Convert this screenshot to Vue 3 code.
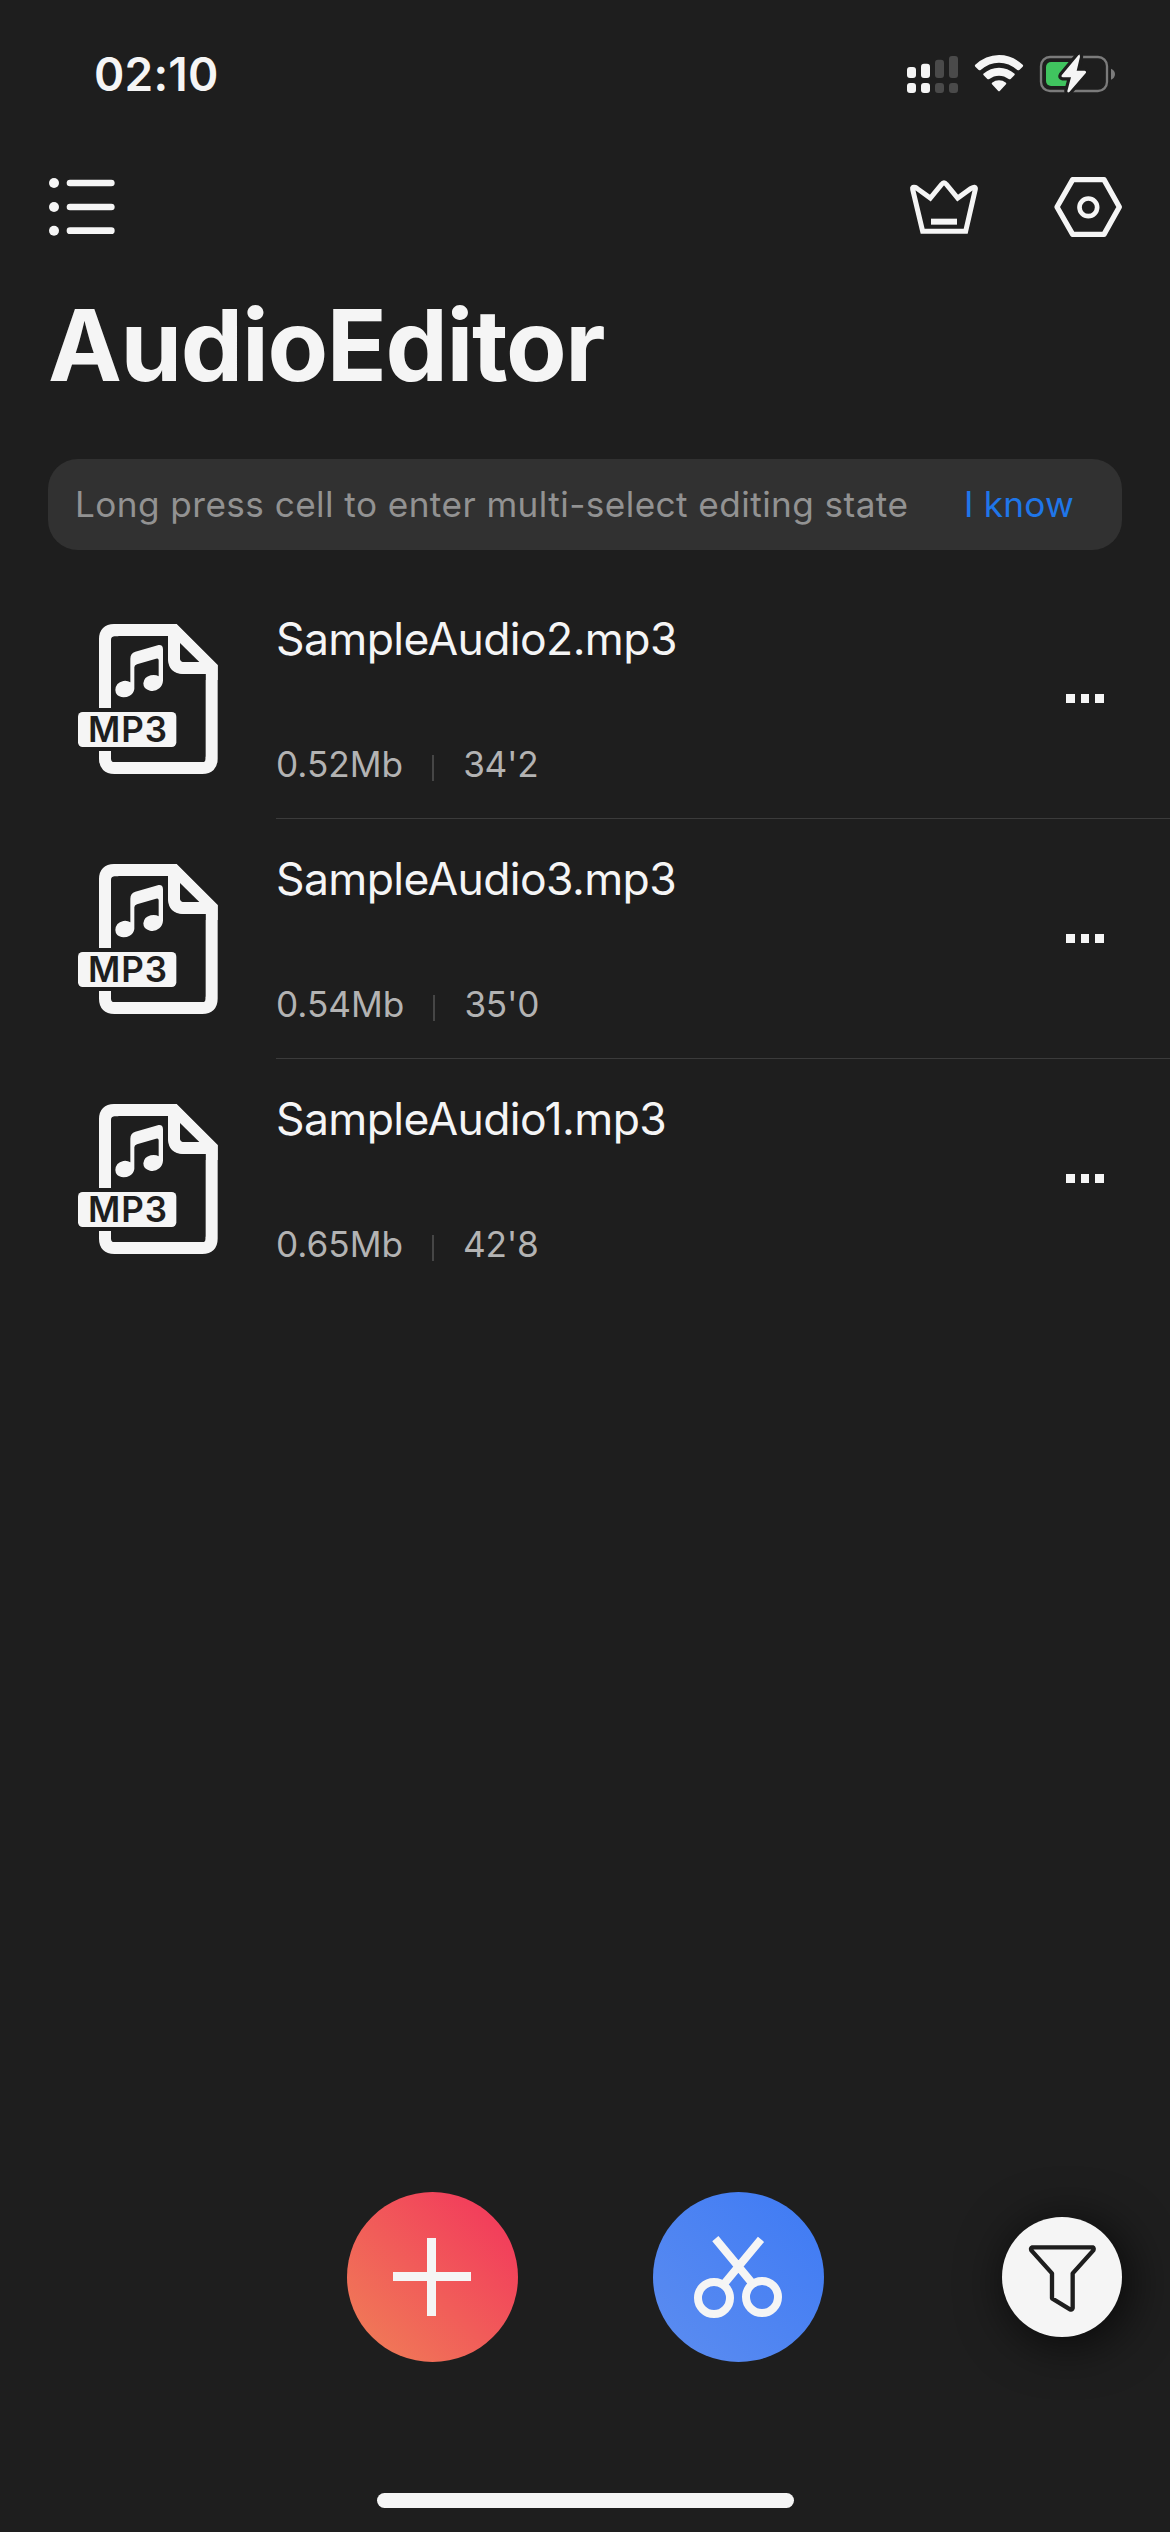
<script setup>
const files = [
  { name: 'SampleAudio2.mp3', size: '0.52Mb', length: "34'2" },
  { name: 'SampleAudio3.mp3', size: '0.54Mb', length: "35'0" },
  { name: 'SampleAudio1.mp3', size: '0.65Mb', length: "42'8" },
]
</script>

<template>
  <div class="screen">
    <header class="status">
      <span class="time">02:10</span>
      <svg class="status-icons" viewBox="0 0 720 210">
        <g fill="#f5f5f5">
          <rect x="51" y="81" width="27" height="33" rx="9" />
          <rect x="93" y="71" width="27" height="43" rx="9" />
          <rect x="51" y="129" width="27" height="30" rx="9" />
          <rect x="93" y="129" width="27" height="30" rx="9" />
        </g>
        <g fill="#4a4a4a">
          <rect x="135" y="59" width="27" height="55" rx="9" />
          <rect x="177" y="48" width="27" height="66" rx="9" />
          <rect x="135" y="129" width="27" height="30" rx="9" />
          <rect x="177" y="129" width="27" height="30" rx="9" />
        </g>
        <g fill="#f5f5f5">
          <path d="M255 75Q287 45 327 45Q367 45 399 75Q400 78 398 80L388 90Q385 92 382 90Q357 68 327 68Q297 68 272 90Q269 92 266 90L256 80Q254 78 255 75Z" />
          <path d="M280 101Q301 83 327 83Q353 83 374 101Q375 104 373 106L362 117Q359 119 356 117Q343 107 327 107Q311 107 298 117Q295 119 292 117L281 106Q279 104 280 101Z" />
          <path d="M306 128Q316 121 327 121Q338 121 348 128Q350 131 348 133L330 152Q327 155 324 152L306 133Q304 131 306 128Z" />
        </g>
        <rect x="453" y="51" width="198" height="102" rx="27" fill="none" stroke="#7b7b7b" stroke-width="7" />
        <path d="M663 86Q675 91 675 102Q675 114 663 119Z" fill="#7b7b7b" />
        <rect x="468" y="66" width="90" height="72" rx="15" fill="#40c45f" />
        <path d="M569 45Q571 41 565 46L515 106Q512 111 518 112L543 112L532 153Q532 160 538 156L588 98Q590 93 584 92L560 92L570 50Z" fill="#f5f5f5" stroke="#1e1e1e" stroke-width="19" stroke-linejoin="round" paint-order="stroke" />
      </svg>
    </header>

    <nav class="toolbar">
      <svg class="menu" viewBox="0 0 270 270" fill="#f5f5f5">
        <circle cx="72" cy="69" r="15" /><rect x="110" y="59" width="144" height="20" rx="10" />
        <circle cx="72" cy="141" r="15" /><rect x="110" y="131" width="144" height="20" rx="10" />
        <circle cx="72" cy="212" r="15" /><rect x="110" y="202" width="144" height="20" rx="10" />
      </svg>
      <svg class="tools" viewBox="0 0 750 270" fill="none" stroke="#f5f5f5" stroke-width="15">
        <path d="M98 214L68 88Q66 80 74 82Q78 82 82 86L121 114L155 73Q162 63 169 73L203 114L242 86Q258 76 256 88L227 214Z" />
        <path d="M123 185H201" stroke-width="18" />
        <path d="M548 59H642L688 141L642 223H548L501 141Z" stroke-width="16" stroke-linejoin="round" />
        <circle cx="595" cy="142" r="26.500" stroke-width="14" />
      </svg>
    </nav>

    <h1 class="title">AudioEditor</h1>

    <div class="notice">
      <span class="tip">Long press cell to enter multi-select editing state</span>
      <span class="dismiss">I know</span>
    </div>

    <main class="list">
      <article v-for="file in files" :key="file.name" class="row">
        <svg class="file-icon" viewBox="0 0 540 570">
          <g fill="none" stroke="#f5f5f5" stroke-width="36">
            <path d="M135 324V117Q135 90 162 90H341L455 203V476Q455 504 427 504H163Q135 504 135 476V453" />
            <path d="M342 92V170Q342 204 376 204H455" />
          </g>
          <path d="M350 72L473 195V240H437V222L324 110V72Z" fill="#f5f5f5" />
          <path d="M324 109V178Q326 222 370 222H437V240H310V109Z" fill="#1e1e1e" />
          <path d="M324 105V178Q326 222 370 222H442V186H371Q360 186 360 175V105Z" fill="#f5f5f5" />
          <path d="M360 129L418 186H371Q360 186 360 175Z" fill="#1e1e1e" />
          <path d="M153 324V120Q153 109 164 109H175V104H148V324ZM153 453V477Q153 487 163 487H175V492H148V453ZM437 470V477Q437 487 427 487H415V492H442V470Z" fill="#f5f5f5" />
          <path d="M223 267Q221 281 209 287Q198 293 184 291Q167 287 166 270Q167 248 190 243Q202 241 211 247V176Q211 160 226 155L296 135Q309 134 309 148V242Q308 256 298 265Q286 275 270 272Q250 268 250 250Q252 231 272 226Q287 223 296 229V181Q296 173 288 176L231 193Q223 196 223 202Z" fill="#f5f5f5" />
          <rect x="54" y="336" width="295" height="105" rx="14" fill="#f5f5f5" />
          <text x="84" y="426" textLength="237" class="badge">MP3</text>
        </svg>
        <div class="body">
          <div class="text">
            <div class="name">{{ file.name }}</div>
            <div class="meta">
              <span>{{ file.size }}</span>
              <i class="bar"></i>
              <span class="length">{{ file.length }}</span>
            </div>
          </div>
          <div class="more"><i></i><i></i><i></i></div>
        </div>
      </article>
    </main>

    <footer class="actions">
      <div class="round add">
        <svg viewBox="0 0 513 510"><path d="M138 253.500H372M253.500 138V372" stroke="#f5f5f5" stroke-width="27" /></svg>
      </div>
      <div class="round cut">
        <svg viewBox="39 66 513 510" fill="none" stroke="#f5f5f5" stroke-width="24">
          <circle cx="222" cy="384" r="48" />
          <circle cx="366" cy="381" r="48" />
          <path d="M226 206L337 340M363 208L252 342" />
        </svg>
      </div>
      <div class="filter">
        <svg viewBox="96 111 360 360" fill="none" stroke="#1e1e1e" stroke-width="13" stroke-linejoin="round">
          <path d="M187 202H368Q373 204 370 211L308 280V384Q306 390 300 388L246 355V280L184 211Q181 204 187 202Z" />
        </svg>
      </div>
    </footer>
    <div class="home"></div>
  </div>
</template>

<style>
body {
  background: #1e1e1e;
}
</style>

<style scoped>
.screen {
  width: 1170px;
  height: 2532px;
  overflow: hidden;
  display: flex;
  flex-direction: column;
  background: #1e1e1e;
  color: #f5f5f5;
  font-family: Inter, "Liberation Sans", sans-serif;
}
svg {
  display: block;
}
.status {
  height: 150px;
  margin-bottom: 10px;
  padding: 0 40px 0 94px;
  display: flex;
  align-items: center;
  justify-content: space-between;
}
.time {
  margin-bottom: 2px;
  font-size: 46px;
  font-weight: 600;
  line-height: 60px;
  letter-spacing: 0.200px;
}
.status-icons {
  width: 240px;
  height: 70px;
}
.toolbar {
  height: 90px;
  padding: 0 30px;
  display: flex;
  justify-content: space-between;
}
.menu {
  width: 90px;
  height: 90px;
}
.tools {
  width: 250px;
  height: 90px;
}
.title {
  margin: 0;
  padding-left: 48px;
  font-size: 99px;
  line-height: 190px;
  font-weight: 700;
  letter-spacing: -1.350px;
}
.notice {
  box-sizing: border-box;
  margin: 19px 48px 0;
  height: 91px;
  padding: 0 48px 2px 27px;
  border-radius: 30px;
  background: #313131;
  display: flex;
  align-items: center;
  justify-content: space-between;
  font-size: 35.200px;
}
.tip {
  color: #929292;
  letter-spacing: 0.420px;
}
.dismiss {
  color: #1f76e9;
  letter-spacing: 0.200px;
}
.list {
  margin-top: 29px;
}
.row {
  height: 240px;
  display: flex;
  padding-left: 60px;
}
.file-icon {
  width: 180px;
  height: 190px;
  margin: 21px 36px 0 0;
}
.badge {
  font-size: 105px;
  font-weight: 600;
  fill: #1e1e1e;
}
.body {
  flex: 1;
  display: flex;
  justify-content: space-between;
  border-bottom: 1px solid #3b3b3b;
  box-sizing: border-box;
}
.row:last-child .body {
  border-color: transparent;
}
.name {
  margin-top: 30px;
  font-size: 44.500px;
  line-height: 60px;
  letter-spacing: -0.600px;
}
.meta {
  margin-top: 70px;
  display: flex;
  align-items: center;
  font-size: 35.200px;
  line-height: 50px;
  color: #b3b3b3;
}
.bar {
  width: 2px;
  height: 26px;
  margin: 8px 29px 0 29px;
  background: #464646;
}
.length {
  letter-spacing: -0.300px;
}
.more {
  display: flex;
  gap: 6px;
  padding: 115px 66px 0 0;
}
.more i {
  width: 8.600px;
  height: 9px;
  background: #f5f5f5;
}
.actions {
  margin-top: auto;
  height: 170px;
  padding: 0 48px 0 347px;
  display: flex;
  align-items: center;
}
.round {
  width: 171px;
  height: 170px;
  border-radius: 50%;
}
.round svg,
.filter svg {
  width: 100%;
  height: 100%;
}
.add {
  margin-right: 135px;
  background: linear-gradient(45deg, #f07b57 8%, #f23f5b 84%);
}
.cut {
  background: linear-gradient(45deg, #5b8cf0 5%, #417cf4 90%);
}
.filter {
  margin-left: auto;
  width: 120px;
  height: 120px;
  border-radius: 50%;
  background: #f5f5f5;
  box-shadow: 6px 6px 50px rgba(0, 0, 0, 0.75);
}
.home {
  width: 417px;
  height: 15px;
  margin: 131px 0 24px 377px;
  border-radius: 8px;
  background: #f5f5f5;
}
</style>
